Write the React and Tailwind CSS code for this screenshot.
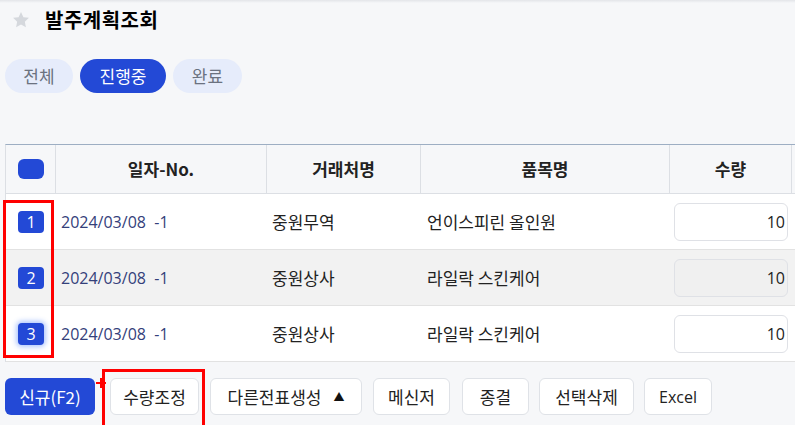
import React from "react";

const rows = [
  { no: 1, date: "2024/03/08 -1", client: "중원무역", item: "언이스피린 올인원", qty: 10, disabled: false, focus: false },
  { no: 2, date: "2024/03/08 -1", client: "중원상사", item: "라일락 스킨케어", qty: 10, disabled: true, focus: false },
  { no: 3, date: "2024/03/08 -1", client: "중원상사", item: "라일락 스킨케어", qty: 10, disabled: false, focus: true },
];

const cols = "grid grid-cols-[50px_211px_154px_249px_122px_1fr]";
const latin = { fontFamily: '"Open Sans", "Noto Sans CJK KR", sans-serif' };

function Star() {
  return (
    <svg viewBox="0 0 24 24" className="w-[20px] h-[20px]" fill="#d5d8dd">
      <path d="M12 2.5l2.9 6.1 6.6.8-4.9 4.6 1.3 6.6L12 17.3l-5.9 3.3 1.3-6.6-4.9-4.6 6.6-.8z" />
    </svg>
  );
}

function Button({ children, primary, className = "" }) {
  return (
    <button
      className={`h-[37px] rounded-md text-[17px] flex items-center justify-center ${
        primary ? "bg-[#2349d6] text-white" : "bg-white border border-[#dfe2e7] text-[#222]"
      } ${className}`}
    >
      {children}
    </button>
  );
}

export default function App() {
  return (
    <div
      className="relative w-[795px] h-[425px] overflow-hidden bg-[#f6f7f9] text-[#222]"
      style={{ fontFamily: '"Noto Sans CJK KR", sans-serif' }}
    >
      <div className="absolute top-0 left-0 right-0 h-[3px] bg-gradient-to-b from-[#e3e5e9] to-transparent" />

      {/* Title */}
      <div className="flex items-center gap-[14px] pl-[11px] pt-[6px] h-[34px]">
        <Star />
        <h1 className="text-[20px] tracking-[0.5px] font-bold leading-none text-black">발주계획조회</h1>
      </div>

      {/* Tabs */}
      <div className="flex gap-[7px] pl-[5px] mt-[25px]">
        <button className="h-[34px] w-[68px] rounded-full bg-[#e6ecfb] text-[#6b7280] text-[17px]">전체</button>
        <button className="h-[34px] w-[86px] rounded-full bg-[#2349d6] text-white text-[17px]">진행중</button>
        <button className="h-[34px] w-[69px] rounded-full bg-[#e6ecfb] text-[#6b7280] text-[17px]">완료</button>
      </div>

      {/* Table */}
      <div className="ml-[5px] mt-[51px] border-t border-[#9daec3] border-l border-l-[#dcdfe4]">
        <div className={`${cols} h-[49px] bg-[#f6f7f9] border-b border-[#dcdfe4] text-[17px] font-bold`}>
          <div className="flex items-center justify-center border-r border-[#dcdfe4]">
            <span className="w-[26px] h-[20px] rounded-md bg-[#2349d6]" />
          </div>
          <div className="flex items-center justify-center border-r border-[#dcdfe4]">일자-No.</div>
          <div className="flex items-center justify-center border-r border-[#dcdfe4]">거래처명</div>
          <div className="flex items-center justify-center border-r border-[#dcdfe4]">품목명</div>
          <div className="flex items-center justify-center border-r border-[#dcdfe4]">수량</div>
          <div />
        </div>
        {rows.map((r) => (
          <div
            key={r.no}
            className={`${cols} h-[56px] border-b border-[#e2e2e2] text-[17px] ${r.disabled ? "bg-[#f2f2f2]" : "bg-white"}`}
          >
            <div className="flex items-center justify-center">
              <span
                className={`w-[26px] h-[22px] rounded-[4px] bg-[#2349d6] text-white text-[16px] flex items-center justify-center ${
                  r.focus ? "shadow-[0_0_5px_2px_rgba(80,130,250,0.45)]" : ""
                }`}
                style={latin}
              >
                {r.no}
              </span>
            </div>
            <div className="flex items-center pl-[5px] text-[16px] text-[#34407a] whitespace-pre" style={latin}>
              {r.date.replace(" -", "  -")}
            </div>
            <div className="flex items-center pl-[5px]">{r.client}</div>
            <div className="flex items-center pl-[6px]">{r.item}</div>
            <div className="flex items-center pl-[4px]">
              <div
                className={`w-[114px] h-[38px] rounded-md border border-[#dfe1e6] flex items-center justify-end pr-[2px] text-[16px] ${
                  r.disabled ? "bg-[#f0f0f0]" : "bg-white"
                }`}
                style={latin}
              >
                {r.qty}
              </div>
            </div>
            <div />
          </div>
        ))}
      </div>

      {/* Buttons */}
      <div className="flex items-center gap-[11px] pl-[5px] mt-[16px]">
        <Button primary className="w-[90px]">신규(F2)</Button>
        <Button className="ml-[4px] w-[89px]">수량조정</Button>
        <Button className="w-[152px] gap-[12px]">
          다른전표생성
          <span className="text-[11px] text-[#111]">▲</span>
        </Button>
        <Button className="w-[77px]">메신저</Button>
        <Button className="ml-[1px] w-[67px]">종결</Button>
        <Button className="-ml-[1px] w-[95px]">선택삭제</Button>
        <Button className="-ml-[1px] w-[68px]">
          <span className="text-[16px]" style={latin}>Excel</span>
        </Button>
      </div>

      {/* Red annotation boxes */}
      <div className="absolute left-[3px] top-[200px] w-[51px] h-[158px] border-[3px] border-[#ff0000]" />
      <div className="absolute left-[102px] top-[369px] w-[103px] h-[60px] border-[3px] border-[#ff0000]" />
      <div className="absolute left-[96px] top-[382px] w-[10px] h-[2px] bg-[#ff0000]" />
      <div className="absolute left-[100px] top-[378px] w-[2px] h-[10px] bg-[#ff0000]" />
    </div>
  );
}
